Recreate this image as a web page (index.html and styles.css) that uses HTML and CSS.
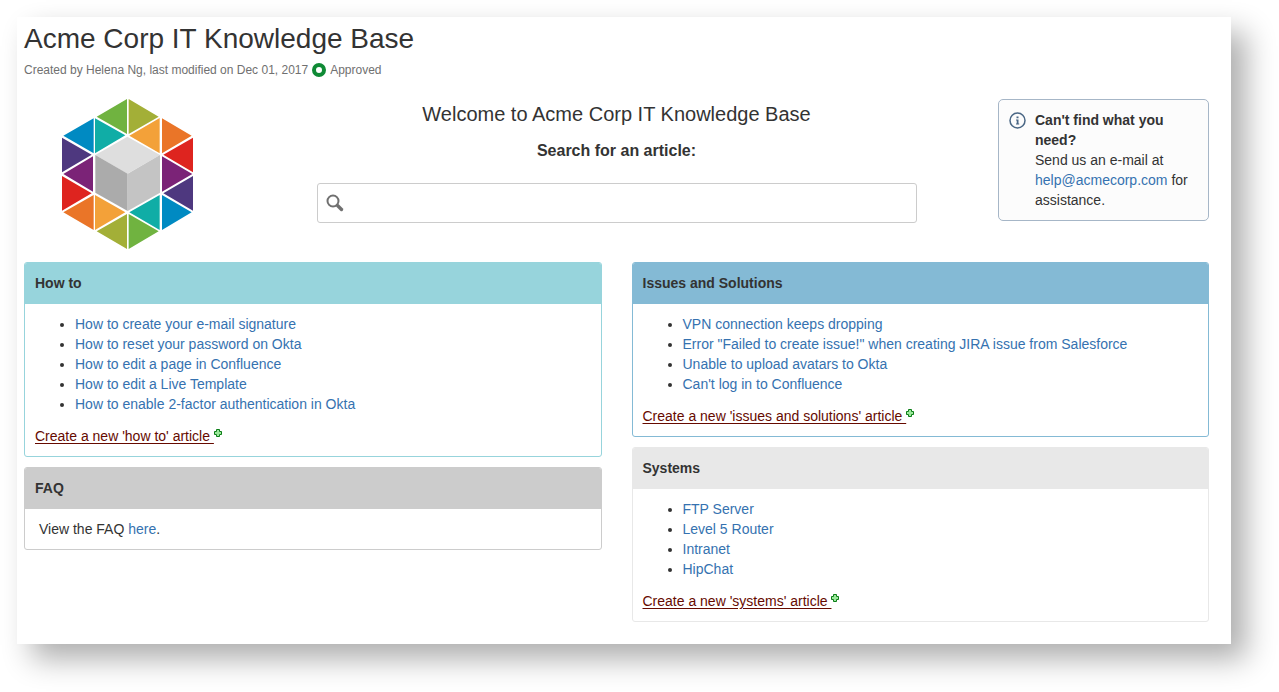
FILE: index.html
```html
<!DOCTYPE html>
<html lang="en">
<head>
<meta charset="utf-8">
<title>Acme Corp IT Knowledge Base</title>
<link rel="stylesheet" href="styles.css">
</head>
<body>
<svg class="defs" aria-hidden="true">
  <symbol id="plus" viewBox="0 0 8 8">
    <path d="M2.500 .5h3v2h2v3h-2v2h-3v-2h-2v-3h2z" fill="#9be89b" stroke="#0b7d16" stroke-width="1"/>
  </symbol>
</svg>
<main class="page">
  <header class="page-header">
    <h1 class="page-title">Acme Corp IT Knowledge Base</h1>
    <p class="meta">
      <span>Created by Helena Ng, last modified on Dec 01, 2017</span>
      <svg class="status" viewBox="0 0 14 14" aria-hidden="true"><circle cx="7" cy="7" r="5" fill="#fff" stroke="#0f8a35" stroke-width="4"/></svg>
      <span>Approved</span>
    </p>
  </header>

  <section class="hero">
    <svg class="logo" viewBox="36 27 393 450" role="img" aria-label="Acme Corp logo">
      <path fill="#70b340" d="M231 27V132L140 80zM236 372V477L326 424z"/>
      <path fill="#a3af37" d="M236 27V132L326 80zM231 372V477L140 424z"/>
      <path fill="#008ac2" d="M131 85V190L40 137zM336 315V420L425 367z"/>
      <path fill="#10ada6" d="M135 85V190L226 136zM329 315V420L238 367z"/>
      <path fill="#f3a139" d="M329 84V190L238 137zM135 315V420L226 367z"/>
      <path fill="#ea7528" d="M336 85V190L425 137zM131 315V420L40 367z"/>
      <path fill="#4e387f" d="M36 143V247L125 194zM429 258V362L340 310z"/>
      <path fill="#7b2377" d="M129 199V305L40 252zM336 199V305L427 252z"/>
      <path fill="#de241f" d="M429 143V247L340 194zM36 258V362L125 310z"/>
      <path fill="#dedede" d="M232 140L330 195L232 251L136 195z"/>
      <path fill="#ababab" d="M136 195L233 251V363L136 308z"/>
      <path fill="#c4c4c4" d="M330 195L233 251V363L330 308z"/>
    </svg>
    <div class="search">
      <h2 class="welcome">Welcome to Acme Corp IT Knowledge Base</h2>
      <label class="search-label" for="q">Search for an article:</label>
      <div class="search-box">
        <svg class="search-icon" viewBox="0 0 18 18" aria-hidden="true"><circle cx="7" cy="7" r="5.500" fill="none" stroke="#707070" stroke-width="2"/><path d="M11.500 11.500L15.500 15.500" stroke="#707070" stroke-width="3.400" stroke-linecap="round"/></svg>
        <input class="search-input" id="q" type="search">
      </div>
    </div>
    <aside class="info">
      <svg class="info-icon" viewBox="0 0 17 17" aria-hidden="true"><circle cx="8.500" cy="8.500" r="7.500" fill="none" stroke="#4a6785" stroke-width="1.500"/><path fill="#4a6785" d="M7.500 4.500h2v1.700h-2zM7 7.500h2.500v4h.7v1H7v-1h.7v-3H7z"/></svg>
      <div>
        <strong>Can't find what you need?</strong>
        <p class="text">Send us an e-mail at <a href="#">help@acmecorp.com</a> for assistance.</p>
      </div>
    </aside>
  </section>

  <div class="columns">
    <div class="column">
      <section class="panel howto">
        <h3 class="panel-title">How to</h3>
        <div class="panel-body">
          <ul class="links">
            <li><a href="#">How to create your e-mail signature</a></li>
            <li><a href="#">How to reset your password on Okta</a></li>
            <li><a href="#">How to edit a page in Confluence</a></li>
            <li><a href="#">How to edit a Live Template</a></li>
            <li><a href="#">How to enable 2-factor authentication in Okta</a></li>
          </ul>
          <a class="create" href="#"><span class="create-text">Create a new 'how to' article </span><svg class="plus"><use href="#plus"/></svg></a>
        </div>
      </section>
      <section class="panel faq">
        <h3 class="panel-title">FAQ</h3>
        <div class="panel-body"><p class="text note">View the FAQ <a href="#">here</a>.</p></div>
      </section>
    </div>
    <div class="column">
      <section class="panel issues">
        <h3 class="panel-title">Issues and Solutions</h3>
        <div class="panel-body">
          <ul class="links">
            <li><a href="#">VPN connection keeps dropping</a></li>
            <li><a href="#">Error "Failed to create issue!" when creating JIRA issue from Salesforce</a></li>
            <li><a href="#">Unable to upload avatars to Okta</a></li>
            <li><a href="#">Can't log in to Confluence</a></li>
          </ul>
          <a class="create" href="#"><span class="create-text">Create a new 'issues and solutions' article </span><svg class="plus"><use href="#plus"/></svg></a>
        </div>
      </section>
      <section class="panel systems">
        <h3 class="panel-title">Systems</h3>
        <div class="panel-body">
          <ul class="links">
            <li><a href="#">FTP Server</a></li>
            <li><a href="#">Level 5 Router</a></li>
            <li><a href="#">Intranet</a></li>
            <li><a href="#">HipChat</a></li>
          </ul>
          <a class="create" href="#"><span class="create-text">Create a new 'systems' article </span><svg class="plus"><use href="#plus"/></svg></a>
        </div>
      </section>
    </div>
  </div>
</main>
</body>
</html>
```
FILE: styles.css
```css
* { box-sizing: border-box; }
body {
  margin: 0;
  padding: 17px 48px 48px 17px;
  background: #fff;
  color: #333;
  font: 14px/20px "Liberation Sans", Arial, sans-serif;
}
a { color: #3572b0; text-decoration: none; }
.defs { position: absolute; width: 0; height: 0; }
.page {
  padding: 6px 22px 22px 7px;
  background: #fff;
  box-shadow: 15px 15px 28px rgba(0, 0, 0, .32);
}
.page-title { margin: 0; font-size: 28px; line-height: 32px; font-weight: 400; }
.meta {
  display: flex;
  align-items: center;
  gap: 4px;
  margin: 5px 0 0;
  color: #707070;
  font-size: 12px;
}
.status { width: 14px; height: 14px; }
.hero {
  display: grid;
  grid-template-columns: 211px minmax(0, 600px) 211px;
  justify-content: space-between;
  align-items: start;
  margin-top: 19px;
}
.logo { width: 131px; height: 150px; margin-left: 38px; }
.search { display: flex; flex-direction: column; text-align: center; }
.welcome { margin: 0; font-size: 20px; line-height: 30px; font-weight: 400; }
.search-label { margin-top: 12px; font-size: 16px; font-weight: 700; }
.search-box {
  display: flex;
  align-items: center;
  gap: 8px;
  height: 40px;
  margin-top: 22px;
  padding: 0 8px;
  border: 1px solid #ccc;
  border-radius: 3px;
}
.search-icon { width: 18px; height: 18px; flex: none; }
.search-input { flex: 1; min-width: 0; border: 0; outline: 0; background: none; font: inherit; color: inherit; }
.info {
  display: flex;
  gap: 9px;
  padding: 10px;
  border: 1px solid #a6b6c7;
  border-radius: 5px;
  background: #fcfcfc;
}
.info-icon { flex: none; width: 17px; height: 17px; margin-top: 2px; }
.text { margin: 0; }
.columns { display: grid; grid-template-columns: 1fr 1fr; gap: 30px; margin-top: 13px; }
.column { display: flex; flex-direction: column; gap: 10px; }
.panel { border: 1px solid; border-radius: 3px; overflow: hidden; }
.panel-title { margin: 0; padding: 10px 10px 11px; font-size: 14px; line-height: 20px; }
.panel-body { padding: 10px; }
.links { margin: 0 0 12px; padding-left: 40px; }
.create { display: inline-flex; align-items: flex-start; color: #660a00; }
.create-text { white-space: pre; text-decoration: underline; text-underline-offset: 2px; }
.plus { width: 8px; height: 8px; margin-top: 3px; }
.note { padding-left: 4px; }
.howto { border-color: #97d4dc; }
.howto .panel-title { background: #97d4dc; }
.faq { border-color: #ccc; }
.faq .panel-title { background: #ccc; }
.issues { border-color: #84bad5; }
.issues .panel-title { background: #84bad5; }
.systems { border-color: #e8e8e8; }
.systems .panel-title { background: #e8e8e8; }
```
